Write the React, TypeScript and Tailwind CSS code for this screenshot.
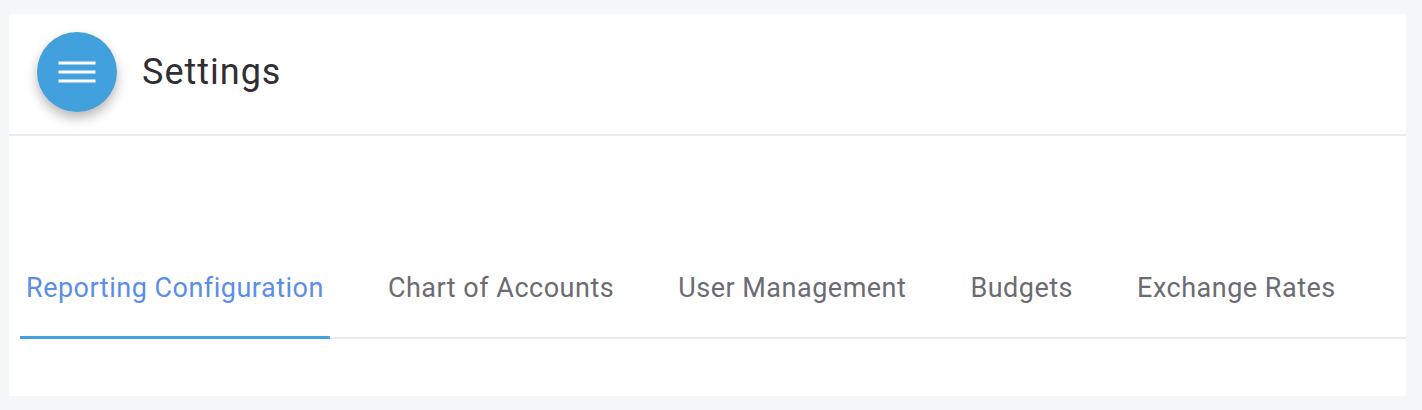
import { useState } from 'react';

const tabs = ['Reporting Configuration', 'Chart of Accounts', 'User Management', 'Budgets', 'Exchange Rates'];

const App = () => {
	const [active, setActive] = useState(0);

	return (
		<div className="min-h-[410px] bg-[#f6f7f9] pt-[14px] pl-[9px] pr-[16px] pb-[14px]" style={{ fontFamily: 'Roboto, "Liberation Sans", sans-serif' }}>
			<div className="h-[382px] bg-white">
				<div className="flex h-[122px] items-center border-b-2 border-[#e8ebef] pl-[28px]">
					<button className="flex h-[80px] w-[80px] -mt-[4px] items-center justify-center rounded-full bg-[#42a1dc] shadow-[0_6px_12px_rgba(0,0,0,0.28)]">
						<svg width="38" height="24" viewBox="0 0 38 24" fill="none">
							<rect x="0.5" y="1.5" width="37" height="3" fill="white" />
							<rect x="0.5" y="10.5" width="37" height="3" fill="white" />
							<rect x="0.5" y="19.5" width="37" height="3" fill="white" />
						</svg>
					</button>
					<h1 className="ml-[25px] -mt-[4px] text-[36px] leading-none tracking-[1px] text-[#2f2f33]">Settings</h1>
				</div>
				<div className="pt-[137px] pl-[11px]">
					<div className="flex gap-[52px] border-b-2 border-[#e8ebef]">
						{tabs.map((tab, i) => (
							<button
								key={tab}
								onClick={() => setActive(i)}
								className={`-mb-[2px] border-b-[3px] px-[6px] pb-[33px] text-[27px] leading-[30px] tracking-[0.5px] ${
									i === active ? 'border-[#42a3e0] text-[#5b8ee8]' : 'border-transparent text-[#6b6c72]'
								}`}
							>
								{tab}
							</button>
						))}
					</div>
				</div>
			</div>
		</div>
	);
};

export default App;
